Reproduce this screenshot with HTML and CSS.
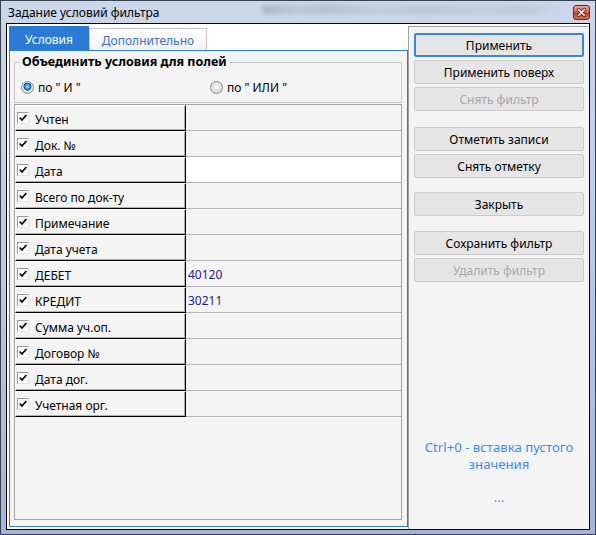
FILE: index.html
```html
<!DOCTYPE html>
<html lang="ru">
<head>
<meta charset="utf-8">
<title>Задание условий фильтра</title>
<link rel="stylesheet" href="styles.css">
</head>
<body>
<div class="window">
  <div class="titlebar">
    <span class="title">Задание условий фильтра</span>
    <span class="glass"></span>
    <span class="close" aria-label="Закрыть">
      <svg width="17" height="15" viewBox="0 0 17 15">
        <path d="M5.5 4.5 L11.5 10.5 M11.5 4.5 L5.5 10.5" stroke="#5a1a10" stroke-width="3.2" stroke-linecap="round"/>
        <path d="M5.5 4.5 L11.5 10.5 M11.5 4.5 L5.5 10.5" stroke="#ffffff" stroke-width="1.7" stroke-linecap="round"/>
      </svg>
    </span>
  </div>
  <div class="client">
    <div class="tabs-col">
      <div class="tabstrip">
        <div class="tab active">Условия</div>
        <div class="tab">Дополнительно</div>
      </div>
      <div class="tabpanel">
        <fieldset class="group">
          <legend>Объединить условия для полей</legend>
          <div class="radios">
            <label class="radio first"><span class="rb on"></span>по " И "</label>
            <label class="radio"><span class="rb"></span>по " ИЛИ "</label>
          </div>
        </fieldset>
        <div class="grid">
          <div class="name"><span class="cb"><svg width="10" height="10" viewBox="0 0 10 10"><path d="M1.8 4.6 L4 7 L8.4 2" fill="none" stroke="#000" stroke-width="1.7"/></svg></span><span class="lbl">Учтен</span></div>
          <div class="val"></div>
          <div class="name"><span class="cb"><svg width="10" height="10" viewBox="0 0 10 10"><path d="M1.8 4.6 L4 7 L8.4 2" fill="none" stroke="#000" stroke-width="1.7"/></svg></span><span class="lbl">Док. №</span></div>
          <div class="val"></div>
          <div class="name"><span class="cb"><svg width="10" height="10" viewBox="0 0 10 10"><path d="M1.8 4.6 L4 7 L8.4 2" fill="none" stroke="#000" stroke-width="1.7"/></svg></span><span class="lbl">Дата</span></div>
          <div class="val edit"></div>
          <div class="name"><span class="cb"><svg width="10" height="10" viewBox="0 0 10 10"><path d="M1.8 4.6 L4 7 L8.4 2" fill="none" stroke="#000" stroke-width="1.7"/></svg></span><span class="lbl">Всего по док-ту</span></div>
          <div class="val"></div>
          <div class="name"><span class="cb"><svg width="10" height="10" viewBox="0 0 10 10"><path d="M1.8 4.6 L4 7 L8.4 2" fill="none" stroke="#000" stroke-width="1.7"/></svg></span><span class="lbl">Примечание</span></div>
          <div class="val"></div>
          <div class="name"><span class="cb"><svg width="10" height="10" viewBox="0 0 10 10"><path d="M1.8 4.6 L4 7 L8.4 2" fill="none" stroke="#000" stroke-width="1.7"/></svg></span><span class="lbl">Дата учета</span></div>
          <div class="val"></div>
          <div class="name"><span class="cb"><svg width="10" height="10" viewBox="0 0 10 10"><path d="M1.8 4.6 L4 7 L8.4 2" fill="none" stroke="#000" stroke-width="1.7"/></svg></span><span class="lbl">ДЕБЕТ</span></div>
          <div class="val">40120</div>
          <div class="name"><span class="cb"><svg width="10" height="10" viewBox="0 0 10 10"><path d="M1.8 4.6 L4 7 L8.4 2" fill="none" stroke="#000" stroke-width="1.7"/></svg></span><span class="lbl">КРЕДИТ</span></div>
          <div class="val">30211</div>
          <div class="name"><span class="cb"><svg width="10" height="10" viewBox="0 0 10 10"><path d="M1.8 4.6 L4 7 L8.4 2" fill="none" stroke="#000" stroke-width="1.7"/></svg></span><span class="lbl">Сумма уч.оп.</span></div>
          <div class="val"></div>
          <div class="name"><span class="cb"><svg width="10" height="10" viewBox="0 0 10 10"><path d="M1.8 4.6 L4 7 L8.4 2" fill="none" stroke="#000" stroke-width="1.7"/></svg></span><span class="lbl">Договор №</span></div>
          <div class="val"></div>
          <div class="name"><span class="cb"><svg width="10" height="10" viewBox="0 0 10 10"><path d="M1.8 4.6 L4 7 L8.4 2" fill="none" stroke="#000" stroke-width="1.7"/></svg></span><span class="lbl">Дата дог.</span></div>
          <div class="val"></div>
          <div class="name"><span class="cb"><svg width="10" height="10" viewBox="0 0 10 10"><path d="M1.8 4.6 L4 7 L8.4 2" fill="none" stroke="#000" stroke-width="1.7"/></svg></span><span class="lbl">Учетная орг.</span></div>
          <div class="val"></div>
        </div>
      </div>
    </div>
    <div class="side">
      <button class="btn default">Применить</button>
      <button class="btn">Применить поверх</button>
      <button class="btn" disabled>Снять фильтр</button>
      <button class="btn g1">Отметить записи</button>
      <button class="btn">Снять отметку</button>
      <button class="btn g2">Закрыть</button>
      <button class="btn g3">Сохранить фильтр</button>
      <button class="btn" disabled>Удалить фильтр</button>
      <div class="note">Ctrl+0 - вставка пустого значения<br><br>...</div>
    </div>
  </div>
</div>
</body>
</html>
```

FILE: styles.css
```css
* { box-sizing: border-box; }

body {
  margin: 0;
  font-family: "Noto Sans", "Open Sans", sans-serif;
  font-size: 12px;
  background: #9eb0d8;
}

.window {
  width: 596px;
  height: 535px;
  border: 1px solid #39424f;
  background: linear-gradient(180deg, #cbd7ea 0%, #bccbe6 45%, #a2b4dc 100%);
  padding: 0 5px 4px;
  display: flex;
  flex-direction: column;
}

.titlebar {
  height: 22px;
  display: flex;
  align-items: center;
  padding-left: 2px;
}

.title {
  color: #000;
  font-size: 12px;
  width: 250px;
}

.glass {
  flex: 1;
  height: 9px;
  margin: 0 16px 6px 4px;
  border-radius: 4px;
  background: linear-gradient(90deg,
    rgba(60, 70, 95, 0.22) 0%, rgba(60, 70, 95, 0.10) 12%,
    rgba(60, 70, 95, 0.16) 22%, rgba(60, 70, 95, 0.06) 40%,
    rgba(60, 70, 95, 0.12) 55%, rgba(60, 70, 95, 0.05) 75%,
    rgba(60, 70, 95, 0.10) 88%, rgba(60, 70, 95, 0) 100%);
  filter: blur(2px);
}

.close {
  width: 17px;
  height: 15px;
  border: 1px solid #6a2a1f;
  border-radius: 3px;
  background: linear-gradient(180deg, #e8a796 0%, #d46d55 45%, #c2432b 55%, #d9735a 100%);
  display: flex;
  align-items: center;
  justify-content: center;
  overflow: hidden;
}
.close svg { display: block; flex: none; }

.client {
  flex: 1;
  border: 1px solid #000;
  background: #ffffff;
  display: flex;
}

.tabs-col {
  width: 401px;
  padding: 2px 0 2px 2px;
  display: flex;
  flex-direction: column;
}

.tabstrip {
  height: 24px;
  display: flex;
  align-items: flex-end;
}

.tab {
  height: 22px;
  width: 118px;
  border: 1px solid #c3c3c3;
  border-bottom: none;
  background: linear-gradient(180deg, #ffffff, #f2f2f2);
  color: #3b6fc6;
  display: flex;
  align-items: center;
  justify-content: center;
  padding-top: 1px;
}

.tab.active {
  width: 80px;
  height: 24px;
  border: none;
  background: #2b7ad3;
  color: #ffffff;
  padding-top: 2px;
}

.tabpanel {
  flex: 1;
  border: 1px solid #2b7ad3;
  background: #f4f4f4;
  display: flex;
  flex-direction: column;
}

.group {
  margin: 4px 5px 0 4px;
  padding: 0 0 8px 5px;
  border: 1px solid #c8c8c8;
  min-width: 0;
}

.group legend {
  padding: 0 2px;
  font-weight: bold;
  font-size: 12.5px;
  line-height: 14px;
  color: #000;
}

.radios {
  display: flex;
  align-items: center;
  margin-top: 11px;
  height: 14px;
}

.radio {
  display: flex;
  align-items: center;
  color: #000;
}

.radio.first {
  width: 189px;
  margin-left: 1px;
}

.rb {
  width: 13px;
  height: 13px;
  border-radius: 50%;
  border: 1px solid #8c8e90;
  background: radial-gradient(circle at 50% 45%, #f6f6f6 0, #e2e2e2 50%, #cfcfcf 100%);
  margin-right: 4px;
  flex: none;
}

.rb.on {
  background:
    radial-gradient(circle at 50% 42%, #c9ecff 0, #5ab4ee 1.5px, #1c6dbd 3.2px, #0f4d8f 3.8px, transparent 4.2px),
    radial-gradient(circle at 50% 45%, #f6f6f6 0, #e2e2e2 50%, #cfcfcf 100%);
}

.grid {
  margin: 1px 5px 0 4px;
  height: 416px;
  border: 1px solid #a2a2a2;
  background: #f4f4f4;
  display: grid;
  grid-template-columns: 171px 1fr;
  grid-auto-rows: 26px;
  align-content: start;
}

.name {
  border-top: 1px solid #ffffff;
  border-left: 1px solid #ffffff;
  border-right: 1px solid #000000;
  border-bottom: 1px solid #000000;
  box-shadow: inset -1px -1px 0 #b0b0b0;
  display: flex;
  align-items: center;
  padding-left: 1px;
  color: #000;
}

.cb {
  width: 12px;
  height: 12px;
  background: #ffffff;
  border-top: 1px solid #9a9a9a;
  border-left: 1px solid #9a9a9a;
  border-right: 1px solid #e4e4e4;
  border-bottom: 1px solid #e4e4e4;
  display: flex;
  align-items: center;
  justify-content: center;
  flex: none;
}
.cb svg { display: block; }

.lbl {
  margin-left: 6px;
  padding-top: 2px;
  white-space: nowrap;
}

.val {
  border-bottom: 1px solid #b4b4b4;
  padding: 2px 0 0 2px;
  display: flex;
  align-items: center;
  color: #24208c;
}

.val.edit {
  background: #ffffff;
}

.side {
  width: 181px;
  margin-top: 2px;
  border-top: 1px solid #a0a0a0;
  border-left: 1px solid #a0a0a0;
  background: #f4f4f4;
  padding: 6px 5px 0;
  display: flex;
  flex-direction: column;
  gap: 3px;
}

.btn {
  height: 24px;
  width: 170px;
  flex: none;
  font: inherit;
  color: #000;
  background: #e5e5e5;
  border: 1px solid #cbcbcb;
  border-radius: 2px;
  padding: 0;
}

.btn.default {
  border: 2px solid #3887df;
}

.btn:disabled {
  color: #a8a8a8;
}

.g1 { margin-top: 13px; }
.g2 { margin-top: 11px; }
.g3 { margin-top: 12px; }

.note {
  margin-top: auto;
  margin-bottom: 24px;
  text-align: center;
  font-size: 13.2px;
  line-height: 16.5px;
  color: #3b8ced;
}
```
